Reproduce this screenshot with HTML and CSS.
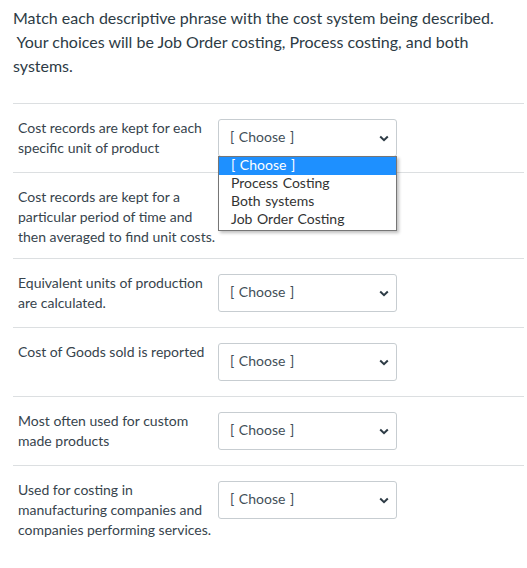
FILE: index.html
```html
<!DOCTYPE html>
<html lang="en">
<head>
    <meta charset="UTF-8">
    <meta name="viewport" content="width=device-width, initial-scale=1.0">
    <title>Matching question</title>
    <link rel="stylesheet" href="styles.css">
</head>
<body>
    <div class="question">
        <p class="intro">Match each descriptive phrase with the cost system being described. &nbsp;Your choices will be Job Order costing, Process costing, and both systems.</p>

        <div class="answers">
            <div class="answer">
                <div class="label">Cost records are kept for each specific unit of product</div>
                <div class="select-wrap">
                    <div class="select">
                        <span>[ Choose ]</span>
                        <svg class="chevron" width="10" height="7" viewBox="0 0 10 7"><polyline points="1.2,1.5 5,5.2 8.8,1.5" fill="none" stroke="#2d3b45" stroke-width="2"/></svg>
                    </div>
                    <ul class="menu">
                        <li class="active">[ Choose ]</li>
                        <li>Process Costing</li>
                        <li>Both systems</li>
                        <li>Job Order Costing</li>
                    </ul>
                </div>
            </div>

            <div class="answer">
                <div class="label">Cost records are kept for a particular period of time and then averaged to find unit costs.</div>
                <div class="select-wrap">
                    <div class="select">
                        <span></span>
                        <svg class="chevron" width="10" height="7" viewBox="0 0 10 7"><polyline points="1.2,1.5 5,5.2 8.8,1.5" fill="none" stroke="#2d3b45" stroke-width="2"/></svg>
                    </div>
                </div>
            </div>

            <div class="answer">
                <div class="label">Equivalent units of production are calculated.</div>
                <div class="select-wrap">
                    <div class="select">
                        <span>[ Choose ]</span>
                        <svg class="chevron" width="10" height="7" viewBox="0 0 10 7"><polyline points="1.2,1.5 5,5.2 8.8,1.5" fill="none" stroke="#2d3b45" stroke-width="2"/></svg>
                    </div>
                </div>
            </div>

            <div class="answer">
                <div class="label">Cost of Goods sold is reported</div>
                <div class="select-wrap">
                    <div class="select">
                        <span>[ Choose ]</span>
                        <svg class="chevron" width="10" height="7" viewBox="0 0 10 7"><polyline points="1.2,1.5 5,5.2 8.8,1.5" fill="none" stroke="#2d3b45" stroke-width="2"/></svg>
                    </div>
                </div>
            </div>

            <div class="answer">
                <div class="label">Most often used for custom made products</div>
                <div class="select-wrap">
                    <div class="select">
                        <span>[ Choose ]</span>
                        <svg class="chevron" width="10" height="7" viewBox="0 0 10 7"><polyline points="1.2,1.5 5,5.2 8.8,1.5" fill="none" stroke="#2d3b45" stroke-width="2"/></svg>
                    </div>
                </div>
            </div>

            <div class="answer">
                <div class="label">Used for costing in manufacturing companies and companies performing services.</div>
                <div class="select-wrap">
                    <div class="select">
                        <span>[ Choose ]</span>
                        <svg class="chevron" width="10" height="7" viewBox="0 0 10 7"><polyline points="1.2,1.5 5,5.2 8.8,1.5" fill="none" stroke="#2d3b45" stroke-width="2"/></svg>
                    </div>
                </div>
            </div>
        </div>
    </div>
</body>
</html>
```

FILE: styles.css
```css
body {
    margin: 0;
    font-family: Lato, "Open Sans", sans-serif;
    color: #2d3b45;
    background-color: #fff;
}

.question {
    width: 511px;
    margin-left: 13px;
}

.intro {
    font-size: 16px;
    line-height: 24px;
    margin: 6px 0 25px;
    padding-right: 11px;
}

.answer {
    display: flex;
    align-items: flex-start;
    border-top: 1px solid #dcdfe1;
    padding: 15px 0 10px 5px;
}

.label {
    flex: 0 0 200px;
    margin: -1px 0 1px;
    font-size: 14px;
    line-height: 20px;
    color: #37444d;
}

.select-wrap {
    position: relative;
    width: 179px;
    margin-bottom: 5px;
}

.select {
    box-sizing: border-box;
    height: 38px;
    display: flex;
    align-items: center;
    justify-content: space-between;
    padding: 0 7px 3px 11px;
    border: 1px solid #c7cdd1;
    border-radius: 3px;
    background-color: #fff;
    font-size: 14px;
    word-spacing: 1px;
    color: #434f58;
}

.chevron {
    display: block;
    margin-top: 3px;
}

/* open dropdown list over the next row */
.menu {
    position: absolute;
    top: 37px;
    left: 0;
    z-index: 5;
    box-sizing: border-box;
    width: 179px;
    margin: 0;
    padding: 0 0 1px;
    list-style: none;
    background-color: #fff;
    border: 1px solid #767676;
    box-shadow: 2px 2px 3px rgba(0, 0, 0, 0.25);
    font-size: 14px;
    color: #333;
}

.menu li {
    height: 18px;
    line-height: 16px;
    padding-left: 12px;
    word-spacing: 1px;
}

.menu .active {
    background-color: #1e90ff;
    color: #fff;
}
```
